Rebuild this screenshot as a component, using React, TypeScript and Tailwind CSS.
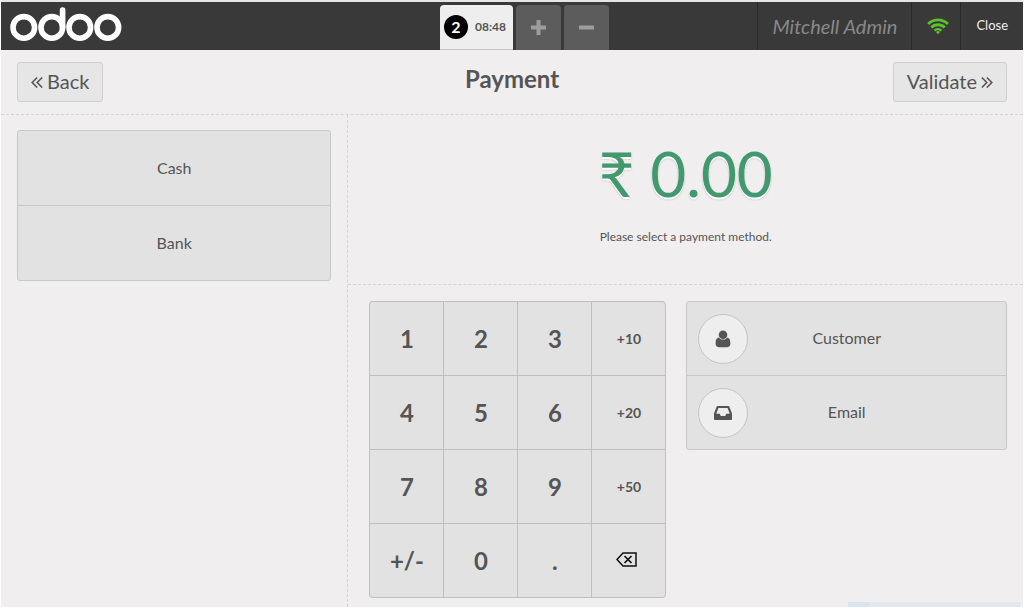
import type { ReactNode } from "react";

const KEYS = [
  ["1", "2", "3", "+10"],
  ["4", "5", "6", "+20"],
  ["7", "8", "9", "+50"],
  ["+/-", "0", ".", "Backspace"],
];

const METHODS = ["Cash", "Bank"];

function Logo() {
  return (
    <svg width="112" height="36" viewBox="0 0 112 36" fill="none" stroke="white" role="img" aria-label="odoo">
      <g strokeWidth="5.6">
        <circle cx="13.8" cy="21.4" r="10.8" />
        <circle cx="41.8" cy="21.4" r="10.8" />
        <circle cx="69.8" cy="21.4" r="10.8" />
        <circle cx="97.8" cy="21.4" r="10.8" />
        <path d="M52.6 21.4V4" strokeLinecap="round" />
      </g>
    </svg>
  );
}

function WifiIcon() {
  return (
    <svg width="22" height="17" viewBox="0 0 22 17" fill="none" stroke="#5ec02f" strokeWidth="2.9">
      <path d="M1.1 6a14 14 0 0 1 19.800 0" />
      <path d="M4.300 9.500a9.500 9.500 0 0 1 13.400 0" />
      <path d="M7.500 12.600a5 5 0 0 1 7 0" strokeWidth="2.400" />
      <path d="M11 13.100a3 3 0 0 1 2 .8L11 16.200l-2-2.300a3 3 0 0 1 2-.8z" fill="#5ec02f" stroke="none" />
    </svg>
  );
}

function Chevrons({ flip = false }: { flip?: boolean }) {
  return (
    <svg
      width="12"
      height="12"
      viewBox="0 0 12 12"
      fill="none"
      stroke="currentColor"
      strokeWidth="1.6"
      className={flip ? "-scale-x-100" : ""}
    >
      <path d="M6.2 1.500L1.200 6.500l5 5M11.200 1.500l-5 5 5 5" />
    </svg>
  );
}

function BackspaceIcon() {
  return (
    <svg width="21" height="15" viewBox="0 0 21 15" fill="none" stroke="#111" strokeWidth="1.5" className="mr-1 mb-0.5">
      <path d="M7 1h13v13H7L1 7.5z" />
      <path d="M8.5 4l7 7M15.5 4l-7 7" strokeWidth="1.7" />
    </svg>
  );
}

function UserIcon() {
  return (
    <svg width="16" height="18" viewBox="0 0 16 18" fill="currentColor">
      <circle cx="8" cy="4.8" r="4.3" />
      <path d="M3.9 7.4C1.3 7.800.6 10.600.6 13.600c0 2.300 1.200 3.600 3.100 3.600h8.600c1.900 0 3.100-1.300 3.100-3.600 0-3-.7-5.800-3.300-6.200C11 8.900 9.600 9.600 8 9.600S5 8.900 3.900 7.400z" />
    </svg>
  );
}

function InboxIcon() {
  return (
    <svg width="18" height="14" viewBox="0 0 18 14" fill="currentColor" fillRule="evenodd">
      <path d="M3.600 0h10.800c.4 0 .7.2.9.6L18 7.400V13c0 .6-.4 1-1 1H1c-.6 0-1-.4-1-1V7.400L2.700.6c.2-.4.5-.6.9-.6zM4.400 2L2.300 7.700h3.400l1.100 2.200h4.400l1.100-2.200h3.400L13.600 2z" />
    </svg>
  );
}

function HeaderBar() {
  return (
    <header className="flex h-12 shrink-0 bg-[#393939]">
      <div className="flex w-[439px] min-w-32 items-start pt-1 pl-[9px]">
        <Logo />
      </div>
      <div className="flex items-end gap-[3px]">
        <button className="flex h-[45px] w-[73px] items-center gap-[7px] rounded-t-sm border-b border-[#c9c5c6] bg-[#eeeeee] pl-1 text-xs font-bold text-[#555555]">
          <span className="flex size-6 items-center justify-center rounded-full bg-black text-base text-white">2</span>
          08:48
        </button>
        <button aria-label="New order" className="flex h-[45px] w-[45px] items-center justify-center rounded-t-sm bg-[#5c5c5c] text-[#9d9d9d]">
          <svg width="15" height="15" viewBox="0 0 15 15" fill="none" stroke="currentColor" strokeWidth="4">
            <path d="M7.5 0v15M0 7.5h15" />
          </svg>
        </button>
        <button aria-label="Delete order" className="flex h-[45px] w-[45px] items-center justify-center rounded-t-sm bg-[#5c5c5c] text-[#9d9d9d]">
          <svg width="15" height="15" viewBox="0 0 15 15" fill="none" stroke="currentColor" strokeWidth="4">
            <path d="M0 7.5h15" />
          </svg>
        </button>
      </div>
      <div className="ml-auto flex">
        <button className="border-l border-[#292929] px-3.5 text-xl text-[#888888] italic">Mitchell Admin</button>
        <button aria-label="Connection status" className="flex w-[49px] items-center justify-center border-l border-[#292929] pl-1">
          <WifiIcon />
        </button>
        <button className="border-l border-[#292929] px-[15px] text-[13px] text-[#eeeeee]">Close</button>
      </div>
    </header>
  );
}

function NavButton({ children }: { children: ReactNode }) {
  return (
    <button className="flex h-10 items-center gap-1 rounded-[3px] border border-[#d0d0d0] bg-[#e6e6e6] px-[13px] text-xl">
      {children}
    </button>
  );
}

function Numpad() {
  return (
    <div className="grid shrink-0 grid-cols-[repeat(4,74px)] self-start overflow-hidden rounded border-t border-l border-[#bfbfbf] bg-[#e2e2e2]">
      {KEYS.flat().map((key, i) => (
        <button
          key={key}
          aria-label={key}
          className={`flex h-[74px] items-center justify-center border-r border-b border-[#bfbfbf] font-bold ${
            i % 4 === 3 ? "text-sm" : "text-2xl"
          } ${i === 15 ? "rounded-br" : ""} ${i === 3 ? "rounded-tr" : ""} ${i === 12 ? "rounded-bl" : ""}`}
        >
          {key === "Backspace" ? <BackspaceIcon /> : key}
        </button>
      ))}
    </div>
  );
}

function OptionButton({ icon, label }: { icon: ReactNode; label: string }) {
  return (
    <button className="flex h-[74px] w-full items-center px-[11px] text-base last:h-[73px]">
      <span className="flex size-[50px] shrink-0 items-center justify-center rounded-full border border-[#c4c4c4] bg-[#eeeeee]">
        {icon}
      </span>
      <span className="grow pr-[50px] pb-0.5">{label}</span>
    </button>
  );
}

export default function App() {
  return (
    <div className="flex min-h-screen flex-col border-x border-t-2 border-b border-x-white border-t-[#e3e7e8] border-b-white bg-[#f0eeee] font-['Lato','Noto_Sans',sans-serif] text-[#555555]">
      <HeaderBar />
      <div className="flex h-[65px] shrink-0 items-center justify-between border-b border-dashed border-[#d6d4d4] px-4">
        <div className="flex flex-1">
          <NavButton>
            <Chevrons />
            <span className="pb-0.5">Back</span>
          </NavButton>
        </div>
        <h1 className="pb-1.5 text-2xl font-bold">Payment</h1>
        <div className="flex flex-1 justify-end">
          <NavButton>
            <span className="pb-0.5">Validate</span>
            <Chevrons flip />
          </NavButton>
        </div>
      </div>

      <main className="flex grow">
        <section className="w-[34%] shrink-0 border-r border-dashed border-[#d6d4d4] px-4 pt-[15px]">
          <div className="divide-y divide-[#c8c8c8] rounded-[3px] border border-[#c8c8c8] bg-[#e2e2e2]">
            {METHODS.map((method) => (
              <button key={method} className="block h-[75px] w-full text-base last:h-[74px]">
                {method}
              </button>
            ))}
          </div>
        </section>

        <section className="flex grow flex-col">
          <div className="flex h-[170px] flex-col items-center border-b border-dashed border-[#d6d4d4] pt-[22px]">
            <div className="text-[62px] leading-[72px] text-[#43996e] [text-shadow:0_2px_white,0_2px_2px_rgba(0,0,0,0.27)]">
              ₹ 0.00
            </div>
            <p className="pt-5 text-xs">Please select a payment method.</p>
          </div>
          <div className="flex grow items-start gap-5 pt-4 pr-4 pb-2 pl-[21px]">
            <Numpad />
            <div className="grow divide-y divide-[#c8c8c8] rounded-[3px] border border-[#c8c8c8] bg-[#e2e2e2]">
              <OptionButton icon={<UserIcon />} label="Customer" />
              <OptionButton icon={<InboxIcon />} label="Email" />
            </div>
          </div>
        </section>
      </main>

      {/* status strip along the bottom edge */}
      <div className="fixed right-[3px] bottom-px flex h-[5px] w-[173px] bg-[#e3e7ee]">
        <div className="w-[22px] bg-[#d9e4ee]" />
      </div>
    </div>
  );
}
